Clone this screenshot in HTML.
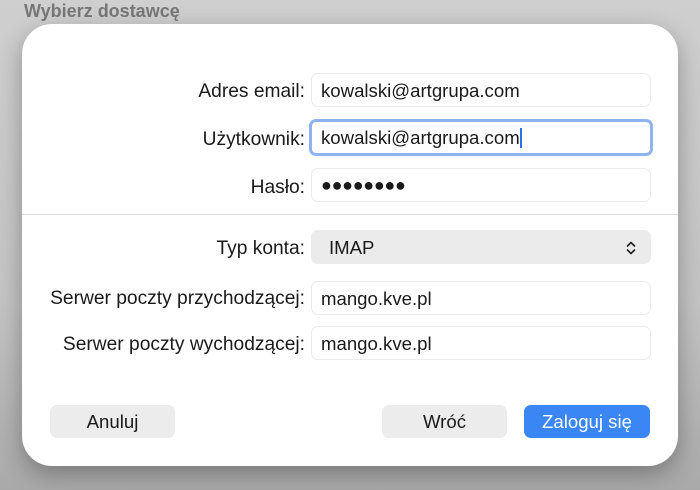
<!DOCTYPE html>
<html><head><meta charset="utf-8"><style>
body{margin:0;width:700px;height:490px;overflow:hidden;background:linear-gradient(#cfcfcf 0,#c4c4c4 300px,#a9a9a9 490px);font-family:"Liberation Sans",sans-serif;position:relative}
.title{position:absolute;left:24px;top:1px;font-size:18px;font-weight:bold;color:#777}
.dlg{position:absolute;left:22px;top:24px;width:656px;height:442px;background:#fff;border-radius:30px;box-shadow:0 8px 24px rgba(0,0,0,.3)}
.lab{position:absolute;right:395px;font-size:19.2px;color:#1a1a1a;white-space:nowrap}
.f{position:absolute;left:311px;width:340px;height:34px;border:1px solid #ececec;border-radius:7px;font-size:18.6px;color:#1a1a1a;box-sizing:border-box;padding-left:9px;line-height:33px;background:#fff}
.sep{position:absolute;left:22px;top:214px;width:656px;height:1px;background:#dcdcdc}
.btn{position:absolute;top:405px;height:33px;border-radius:7px;background:#ececec;font-size:18.6px;text-align:center;line-height:34px;color:#1a1a1a}
</style></head><body>
<div class="title">Wybierz dostawcę</div>
<div class="dlg"></div>
<div class="sep"></div>
<div class="lab" style="top:81px">Adres email:</div>
<div class="f" style="top:73px">kowalski@artgrupa.com</div>
<div class="lab" style="top:129px">Użytkownik:</div>
<div class="f" style="top:119px;left:309px;width:344px;height:37px;border:3px solid #8fb3ef;padding-left:9px;line-height:31px">kowalski@artgrupa.com<span style="display:inline-block;width:2px;height:20px;background:#2f6fe0;vertical-align:-4px"></span></div>
<div class="lab" style="top:177px">Hasło:</div>
<div class="f" style="top:168px;font-size:18px;letter-spacing:-0.3px">●●●●●●●●</div>
<div class="lab" style="top:238px">Typ konta:</div>
<div class="f" style="top:230px;background:#ebebeb;border-color:#ebebeb;padding-left:17px">IMAP<svg style="position:absolute;right:14px;top:10px" width="10" height="14" viewBox="0 0 10 14"><path d="M1.5 5L5 1.5L8.5 5M1.5 9L5 12.5L8.5 9" fill="none" stroke="#222" stroke-width="1.6" stroke-linecap="round" stroke-linejoin="round"/></svg></div>
<div class="lab" style="top:288px">Serwer poczty przychodzącej:</div>
<div class="f" style="top:281px">mango.kve.pl</div>
<div class="lab" style="top:334px">Serwer poczty wychodzącej:</div>
<div class="f" style="top:326px">mango.kve.pl</div>
<div class="btn" style="left:50px;width:125px">Anuluj</div>
<div class="btn" style="left:382px;width:125px">Wróć</div>
<div class="btn" style="left:524px;width:126px;background:#3a86f5;color:#fff">Zaloguj się</div>
</body></html>
